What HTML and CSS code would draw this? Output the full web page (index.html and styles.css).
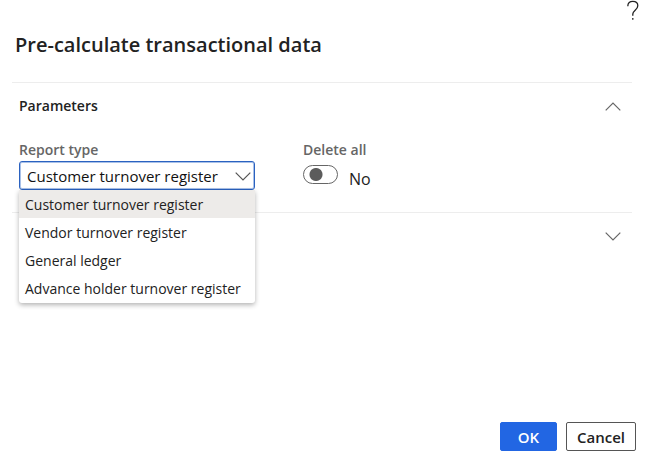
FILE: index.html
```html
<!DOCTYPE html>
<html lang="en">
<head>
<meta charset="utf-8">
<meta name="viewport" content="width=device-width, initial-scale=1">
<title>Pre-calculate transactional data</title>
<link rel="stylesheet" href="styles.css">
</head>
<body>
<form class="dialog">
  <header class="dialog-header">
    <button class="help" type="button" aria-label="Help">
      <svg width="12" height="20" viewBox="0 0 12 20" fill="none" stroke="#222" stroke-width="1.3"><path d="M.8 6.2C.8 2.9 2.8 1.3 5.8 1.3s5 1.8 5 4.4c0 4.2-5 4.7-5 8.4v1.6M5.8 18v1.8"/></svg>
    </button>
    <h1>Pre-calculate transactional data</h1>
  </header>
  <main>
    <section class="group">
      <div class="group-header">
        <h2>Parameters</h2>
        <button class="toggle-group" type="button" aria-label="Collapse parameters" aria-expanded="true">
          <svg width="16" height="9" viewBox="0 0 16 9" fill="none" stroke="#666" stroke-width="1.2"><path d="M.7 8.3 8 1l7.3 7.3"/></svg>
        </button>
      </div>
      <div class="fields">
        <div class="field report">
          <label for="report-type">Report type</label>
          <div class="combo">
            <select id="report-type">
              <option>Customer turnover register</option>
              <option>Vendor turnover register</option>
              <option>General ledger</option>
              <option>Advance holder turnover register</option>
            </select>
            <svg class="chevron" width="16" height="9" viewBox="0 0 16 9" fill="none" stroke="#555" stroke-width="1.2"><path d="M.7.7 8 8 15.3.7"/></svg>
            <ul class="menu" role="listbox" aria-label="Report type">
              <li role="option" aria-selected="true">Customer turnover register</li>
              <li role="option">Vendor turnover register</li>
              <li role="option">General ledger</li>
              <li role="option">Advance holder turnover register</li>
            </ul>
          </div>
        </div>
        <div class="field">
          <label for="delete-all">Delete all</label>
          <div class="switch-row">
            <input class="switch" id="delete-all" type="checkbox" role="switch">
            <span class="switch-value">No</span>
          </div>
        </div>
      </div>
    </section>
    <section class="group">
      <div class="group-header">
        <button class="toggle-group" type="button" aria-label="Expand section" aria-expanded="false">
          <svg width="16" height="9" viewBox="0 0 16 9" fill="none" stroke="#666" stroke-width="1.2"><path d="M.7.7 8 8 15.3.7"/></svg>
        </button>
      </div>
    </section>
  </main>
  <footer class="actions">
    <button class="btn primary" type="submit">OK</button>
    <button class="btn" type="button">Cancel</button>
  </footer>
</form>
</body>
</html>
```
FILE: styles.css
```css
* {
  box-sizing: border-box;
}

body {
  margin: 0;
  background: #fff;
  color: #222;
  font: 14px/20px "Open Sans", "Noto Sans", sans-serif;
}

button,
select {
  font: inherit;
  color: inherit;
}

h1,
h2 {
  margin: 0;
  font-weight: 600;
}

.dialog {
  display: flex;
  flex-direction: column;
  min-height: 100vh;
}

.dialog-header {
  display: flex;
  flex-direction: column;
  padding: 0 16px 23px 15px;
}

.help {
  align-self: flex-end;
  height: 20px;
  padding: 0;
  border: 0;
  background: none;
  margin-right: 2px;
}

.help svg,
.toggle-group svg {
  display: block;
}

h1 {
  margin-top: 11px;
  font-size: 20px;
  line-height: 28px;
}

main {
  margin: 0 25px 0 12px;
}

.group {
  border-top: 1px solid #ededed;
}

.group-header {
  display: flex;
  align-items: center;
  min-height: 46px;
  padding: 0 11px 0 7px;
}

h2 {
  font-size: 14px;
}

.toggle-group {
  margin-left: auto;
  padding: 0;
  border: 0;
  background: none;
}

.fields {
  display: flex;
  gap: 48px;
  padding: 11px 7px 22px;
}

.report {
  width: 236px;
}

.field label {
  display: block;
  margin-bottom: 1px;
  color: #666;
  font-weight: 600;
}

.combo {
  position: relative;
}

.combo select {
  display: block;
  width: 100%;
  height: 29px;
  padding: 0 24px 0 7px;
  appearance: none;
  border: 1px solid #2b62c0;
  border-radius: 3px;
  background: #fff;
  box-shadow: inset 0 0 0 1px #a9c1e8;
  color: #111;
  font-size: 15px;
}

.chevron {
  position: absolute;
  top: 11px;
  right: 4px;
  pointer-events: none;
}

.menu {
  position: absolute;
  z-index: 1;
  top: 100%;
  left: 0;
  width: 100%;
  margin: 0;
  padding: 0 0 1px;
  list-style: none;
  border-radius: 0 0 3px 3px;
  background: #fff;
  box-shadow: 0 2px 5px rgba(0, 0, 0, 0.3);
}

.menu li {
  padding: 5px 6px 3px;
  white-space: nowrap;
}

.menu [aria-selected="true"] {
  background: #edebe9;
}

.switch-row {
  display: flex;
  gap: 11px;
  padding-top: 4px;
}

.switch {
  width: 35px;
  height: 19px;
  margin: 0;
  appearance: none;
  border: 1px solid #666;
  border-radius: 10px;
  background: radial-gradient(circle at 12px 50%, #5c5c5c 6px, transparent 7px);
}

.switch-value {
  padding-top: 4px;
  font-size: 16px;
}

.actions {
  display: flex;
  justify-content: flex-end;
  gap: 9px;
  margin-top: auto;
  padding: 0 21px 20px;
}

.btn {
  height: 29px;
  min-width: 57px;
  padding: 0 10px;
  border: 1px solid #555;
  border-radius: 2px;
  background: #fff;
  font-size: 15px;
  font-weight: 600;
}

.primary {
  border-color: #2266e3;
  background: #2266e3;
  color: #fff;
}
```
